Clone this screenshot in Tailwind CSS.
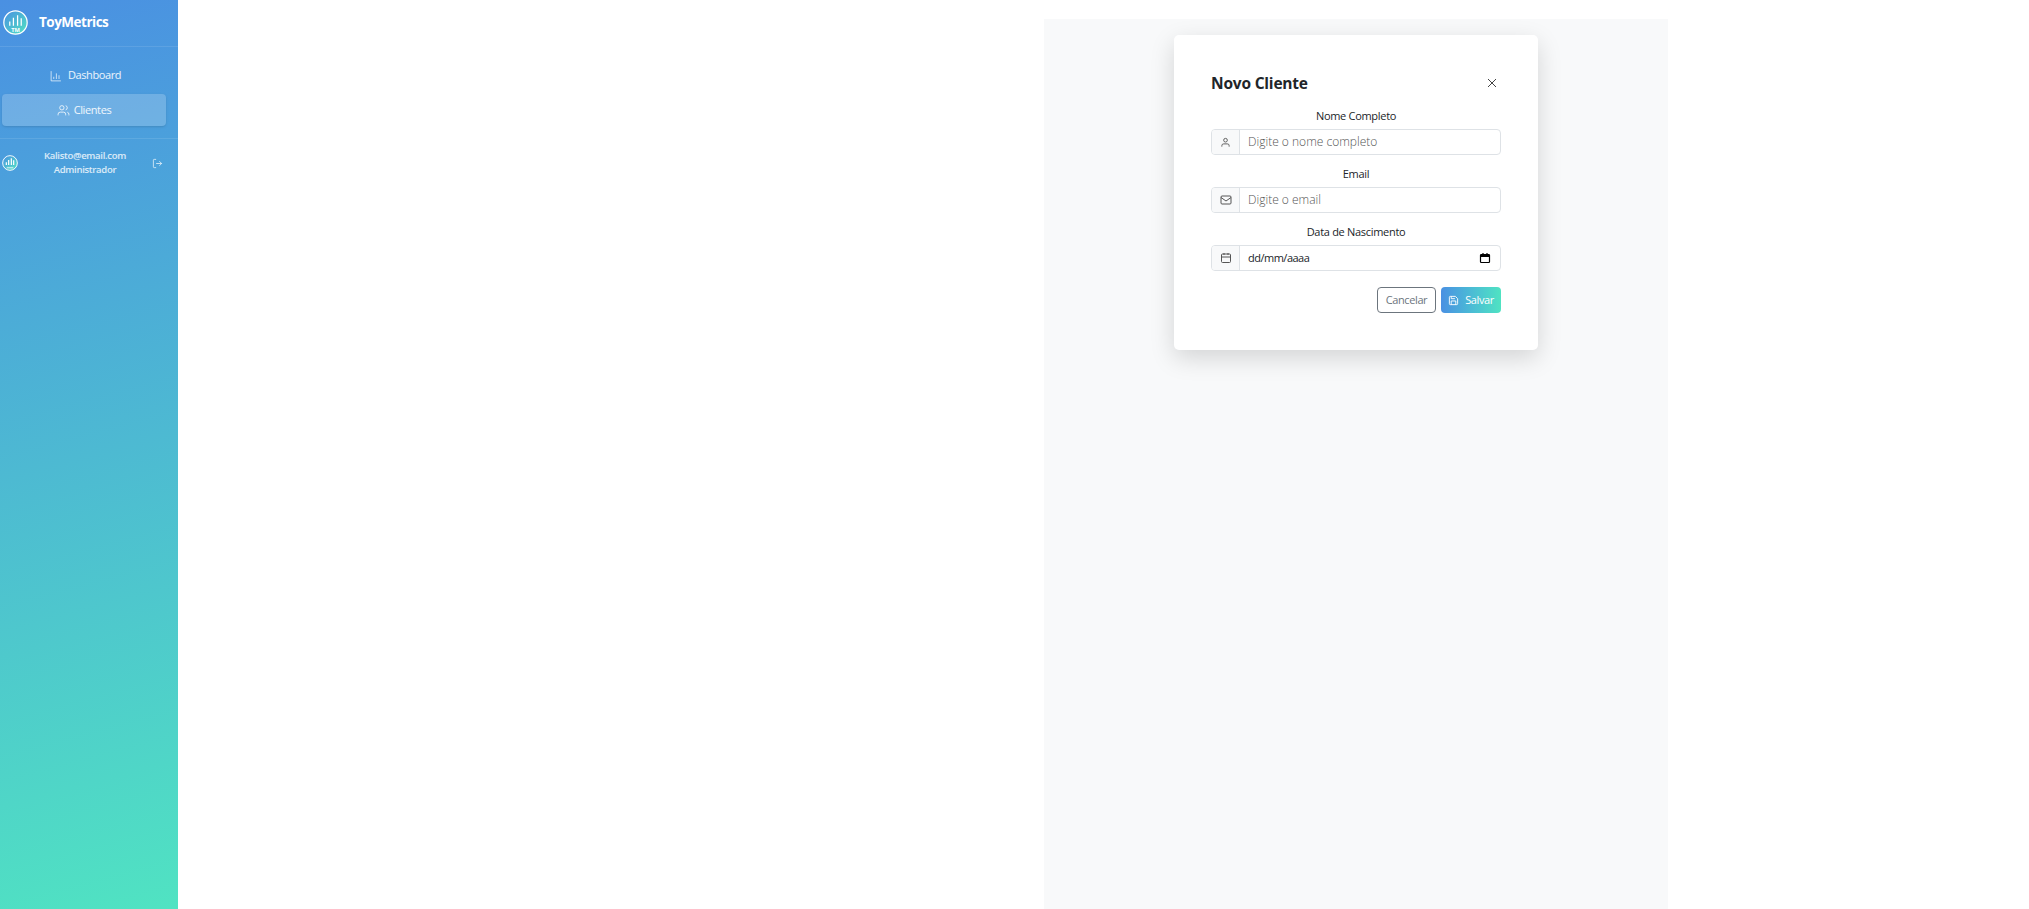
<!DOCTYPE html>
<html lang="pt-BR">

<head>
    <meta charset="UTF-8" />
    <meta name="viewport" content="width=device-width, initial-scale=1.0" />
    <title>ToyMetrics</title>
    <script src="https://cdn.jsdelivr.net/npm/@tailwindcss/browser@4"></script>
</head>

<body class="bg-white font-['Open_Sans','Noto_Sans',sans-serif] h-[909px] overflow-hidden">
    <div class="flex h-[909px]">
        <!-- Sidebar -->
        <aside class="w-[178px] shrink-0 h-full bg-[linear-gradient(165deg,#4a90e2,#50e3c2)] text-white">
            <div class="h-[47px] flex items-center pl-[3px] pb-[2px] border-b border-white/10">
                <svg class="w-[25px] h-[25px]" viewBox="0 0 24 24" fill="none">
                    <defs>
                        <linearGradient id="logoBg" x1="0" y1="0" x2="1" y2="1">
                            <stop offset="0" stop-color="#4a90e2" />
                            <stop offset="1" stop-color="#50e3c2" />
                        </linearGradient>
                    </defs>
                    <circle cx="12" cy="12" r="11.2" fill="url(#logoBg)" stroke="#fff" stroke-width="1.2" />
                    <path d="M6.5 15v-4M10 15V7.5M14 15V5M17.5 15V8" stroke="#fff" stroke-width="1.2" />
                    <text x="12" y="21" text-anchor="middle" font-size="5.5" font-weight="700" fill="#fff">TM</text>
                </svg>
                <span class="ml-[11px] text-[13.5px] font-bold tracking-[-0.5px]">ToyMetrics</span>
            </div>

            <nav class="px-[2px] pt-[11px] pb-[12px] border-b border-white/10">
                <a class="h-[35px] mb-[1px] flex items-center justify-center gap-[6px] text-[11px] tracking-[-0.4px] text-white/90 pr-[7px]">
                    <svg class="w-[12px] h-[12px]" viewBox="0 0 16 16" fill="none" stroke="currentColor" stroke-width="1">
                        <path d="M1.5 1.5v13h13M5 12V9M8.5 12V4.5M12 12V7" />
                    </svg>
                    Dashboard
                </a>
                <a class="h-[32px] w-[164px] flex items-center justify-center gap-[4px] rounded-[4px] bg-white/20 shadow-sm text-[11px] tracking-[-0.4px] text-white/90">
                    <svg class="w-[13px] h-[13px]" viewBox="0 0 24 24" fill="none" stroke="currentColor" stroke-width="1.6">
                        <path d="M16 21v-2a4 4 0 0 0-4-4H6a4 4 0 0 0-4 4v2" />
                        <circle cx="9" cy="7" r="4" />
                        <path d="M22 21v-2a4 4 0 0 0-3-3.87M16 3.13a4 4 0 0 1 0 7.75" />
                    </svg>
                    Clientes
                </a>
            </nav>

            <div class="flex items-center h-[48px] pl-[2px] pr-[15px]">
                <svg class="w-[16px] h-[16px] shrink-0" viewBox="0 0 24 24" fill="none">
                    <circle cx="12" cy="12" r="11" fill="url(#logoBg)" stroke="#fff" stroke-width="1.4" />
                    <path d="M6.5 15v-4M10 15V7.5M14 15V5M17.5 15V8" stroke="#fff" stroke-width="1.8" />
                    <path d="M7 19h10" stroke="#fff" stroke-width="2.4" opacity=".6" />
                </svg>
                <div class="flex-1 text-center text-[9.5px] leading-[14px] font-semibold tracking-[-0.3px] text-white/80">
                    <div>Kalisto@email.com</div>
                    <div>Administrador</div>
                </div>
                <svg class="w-[11px] h-[11px] shrink-0 text-white/75" viewBox="0 0 24 24" fill="none" stroke="currentColor" stroke-width="2">
                    <path d="M9 21H5a2 2 0 0 1-2-2V5a2 2 0 0 1 2-2h4M16 17l5-5-5-5M21 12H9" />
                </svg>
            </div>
        </aside>

        <!-- Main -->
        <main class="flex-1 pt-[19px] pl-[866px]">
            <section class="w-[624px] h-[890px] bg-[#f8f9fa] pt-[16px]">
                <div class="mx-auto w-[364px] h-[315px] bg-white rounded-[5px] shadow-[0_8px_24px_rgba(0,0,0,0.15)] px-[37px] pt-[36px] text-[#212529]">
                    <div class="flex items-center justify-between h-[24px]">
                        <h2 class="pt-[2px] text-[15.5px] font-bold tracking-[-0.2px]">Novo Cliente</h2>
                        <svg class="w-[16px] h-[16px] mr-[1px] text-[#444]" viewBox="0 0 16 16" fill="none" stroke="currentColor" stroke-width="1">
                            <path d="M4 4l8 8M12 4l-8 8" />
                        </svg>
                    </div>

                    <label class="block mt-[9px] h-[24px] leading-[24px] text-center text-[11px] tracking-[-0.3px]">Nome Completo</label>
                    <div class="mt-[1px] flex h-[26px] border border-[#dee2e6] rounded-[4px] overflow-hidden">
                        <span class="w-[28px] shrink-0 flex items-center justify-center bg-[#f8f9fa] border-r border-[#dee2e6] text-[#555]">
                            <svg class="w-[11px] h-[11px]" viewBox="0 0 24 24" fill="none" stroke="currentColor" stroke-width="2">
                                <path d="M20 21v-2a4 4 0 0 0-4-4H8a4 4 0 0 0-4 4v2" />
                                <circle cx="12" cy="7" r="4" />
                            </svg>
                        </span>
                        <input class="flex-1 min-w-0 px-[8px] text-[12px] font-light outline-none placeholder:text-[#555]" placeholder="Digite o nome completo" />
                    </div>

                    <label class="block mt-[7px] h-[24px] leading-[24px] text-center text-[11px] tracking-[-0.3px]">Email</label>
                    <div class="mt-[1px] flex h-[26px] border border-[#dee2e6] rounded-[4px] overflow-hidden">
                        <span class="w-[28px] shrink-0 flex items-center justify-center bg-[#f8f9fa] border-r border-[#dee2e6] text-[#555]">
                            <svg class="w-[12px] h-[12px]" viewBox="0 0 24 24" fill="none" stroke="currentColor" stroke-width="2">
                                <rect x="2" y="4" width="20" height="16" rx="2" />
                                <path d="M22 7l-10 7L2 7" />
                            </svg>
                        </span>
                        <input class="flex-1 min-w-0 px-[8px] text-[12px] font-light outline-none placeholder:text-[#555]" placeholder="Digite o email" />
                    </div>

                    <label class="block mt-[7px] h-[24px] leading-[24px] text-center text-[11px] tracking-[-0.3px]">Data de Nascimento</label>
                    <div class="relative mt-[1px] flex h-[26px] border border-[#dee2e6] rounded-[4px] overflow-hidden">
                        <span class="w-[28px] shrink-0 flex items-center justify-center bg-[#f8f9fa] border-r border-[#dee2e6] text-[#555]">
                            <svg class="w-[12px] h-[12px]" viewBox="0 0 24 24" fill="none" stroke="currentColor" stroke-width="2">
                                <rect x="3" y="4" width="18" height="17" rx="2" />
                                <path d="M8 2v4M16 2v4M3 10h18" />
                            </svg>
                        </span>
                        <input class="flex-1 min-w-0 px-[8px] text-[11px] tracking-[-0.5px] outline-none" value="dd/mm/aaaa" />
                        <svg class="absolute right-[9px] top-[6px] w-[12px] h-[12px] text-black" viewBox="0 0 24 24" fill="none" stroke="currentColor" stroke-width="2.4">
                            <rect x="3" y="5" width="18" height="16" rx="1.5" />
                            <path d="M3 8h18" stroke-width="4" />
                            <path d="M8 2v3M16 2v3" />
                        </svg>
                    </div>

                    <div class="flex justify-end gap-[5px] mt-[16px]">
                        <button class="w-[59px] h-[26px] border border-[#6c757d] rounded-[4px] text-[11px] tracking-[-0.4px] text-[#6c757d]">Cancelar</button>
                        <button class="w-[60px] h-[26px] flex items-center justify-center gap-[6px] rounded-[4px] bg-gradient-to-r from-[#4a90e2] to-[#50e3c2] text-white text-[11px] tracking-[-0.4px]">
                            <svg class="w-[11px] h-[11px]" viewBox="0 0 24 24" fill="none" stroke="currentColor" stroke-width="2">
                                <path d="M19 21H5a2 2 0 0 1-2-2V5a2 2 0 0 1 2-2h11l5 5v11a2 2 0 0 1-2 2z" />
                                <path d="M17 21v-8H7v8M7 3v5h8" />
                            </svg>
                            Salvar
                        </button>
                    </div>
                </div>
            </section>
        </main>
    </div>
</body>

</html>
